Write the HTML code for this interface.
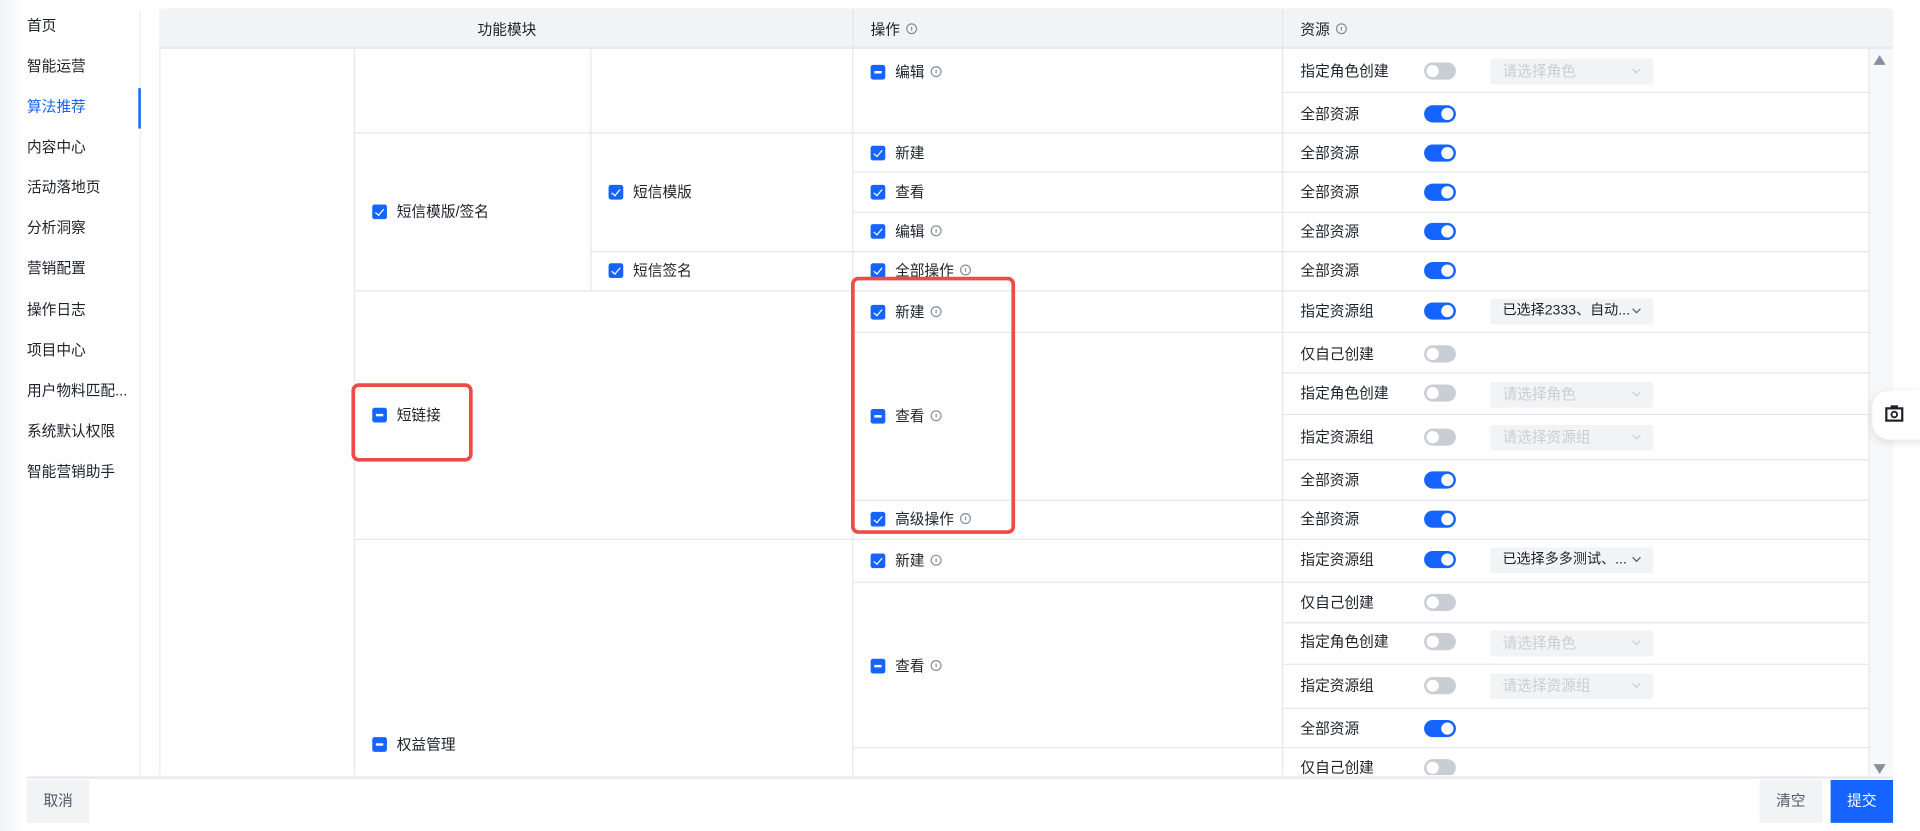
<!DOCTYPE html>
<html><head><meta charset="utf-8"><style>
*{margin:0;padding:0;box-sizing:border-box}
html,body{width:1920px;height:831px;overflow:hidden;background:#fff}
.s{position:absolute;left:0;top:0;width:1568px;height:679px;transform:scale(1.22449);transform-origin:0 0;font-family:"Liberation Sans","Noto Sans CJK SC",sans-serif;font-size:12px;color:#1d2129}
.a{position:absolute}
.nav{position:absolute;left:22px;font-size:12px;line-height:14px}
.r{position:absolute;display:flex;align-items:center;white-space:nowrap;margin-top:-1px}
.cb{width:12px;height:12px;border-radius:2px;background:#1664ff;display:inline-block;position:relative;margin-right:8px;flex:none;margin-top:1px}
.cb.k::after{content:"";position:absolute;left:4px;top:2px;width:3px;height:6px;border:solid #fff;border-width:0 1.3px 1.3px 0;transform:rotate(40deg)}
.cb.m::after{content:"";position:absolute;left:3px;top:5.3px;width:6px;height:1.5px;background:#fff}
.i{display:inline-block;width:9px;height:9px;border:1px solid #86909c;border-radius:50%;margin-left:5px;position:relative}
.i::after{content:"";position:absolute;left:3px;top:1.5px;width:1px;height:3.5px;background:#86909c}
.hl{position:absolute;height:1px;background:#e5e6eb}
.vl{position:absolute;width:1px;background:#e5e6eb}
.tg{position:absolute;left:1163px;width:26px;height:14px;border-radius:7px;background:#c9cdd4}
.tg::after{content:"";position:absolute;left:2px;top:2px;width:10px;height:10px;border-radius:50%;background:#fff}
.tg.on{background:#1664ff}
.tg.on::after{left:14px}
.sel{position:absolute;left:1217px;width:133px;height:21px;background:#f2f3f5;border-radius:2px;color:#c9cdd4;padding-left:10px;line-height:21px;font-size:12px;overflow:hidden;white-space:nowrap}
.sel.v{color:#1d2129;padding-left:10px;font-size:11.5px}
.sel::after{content:"";position:absolute;right:11px;top:6px;width:4px;height:4px;border:solid #c9cdd4;border-width:0 1px 1px 0;transform:rotate(45deg);background:#f2f3f5}
.sel.v::after{border-color:#4e5969}
.lab{position:absolute;left:1062px;margin-top:-1px}
.btn{position:absolute;top:637px;width:51px;height:35px;background:#f2f3f5;line-height:35px;text-align:center;font-size:12px;color:#4e5969}
</style></head><body><div class="s">
<div class="a" style="left:0;top:0;width:22px;height:679px;background:linear-gradient(90deg,#f3f4f6,#fff)"></div>
<div class="vl" style="left:114px;top:8px;height:625px;background:#eceef1"></div>
<div class="a" style="left:113px;top:72px;width:2px;height:33px;background:#1664ff"></div>
<div class="nav" style="top:14px">首页</div>
<div class="nav" style="top:47px">智能运营</div>
<div class="nav" style="top:80px;color:#1664ff">算法推荐</div>
<div class="nav" style="top:113px">内容中心</div>
<div class="nav" style="top:146px">活动落地页</div>
<div class="nav" style="top:179px">分析洞察</div>
<div class="nav" style="top:212px">营销配置</div>
<div class="nav" style="top:246px">操作日志</div>
<div class="nav" style="top:279px">项目中心</div>
<div class="nav" style="top:312px">用户物料匹配...</div>
<div class="nav" style="top:345px">系统默认权限</div>
<div class="nav" style="top:378px">智能营销助手</div>
<div class="a" style="left:130px;top:7px;width:1416px;height:626px;border:1px solid #e5e6eb;border-bottom:none;border-radius:3px 3px 0 0"></div>
<div class="a" style="left:130px;top:7px;width:1416px;height:31px;background:#f2f3f5;border-radius:3px 3px 0 0"></div>
<div class="hl" style="left:130px;top:38px;width:1416px;height:2px;background:#e9eaee"></div>
<div class="vl" style="left:696px;top:7px;height:31px"></div>
<div class="vl" style="left:1047px;top:7px;height:31px"></div>
<div class="r" style="left:390px;top:16px">功能模块</div>
<div class="r" style="left:711px;top:16px">操作<span class="i"></span></div>
<div class="r" style="left:1062px;top:16px">资源<span class="i"></span></div>
<div class="a" style="left:1526px;top:40px;width:20px;height:593px;background:#f7f8fa;border-left:1px solid #e5e6eb"></div>
<div class="a" style="left:1530px;top:45px;width:0;height:0;border-left:5px solid transparent;border-right:5px solid transparent;border-bottom:8px solid #86909c"></div>
<div class="a" style="left:1530px;top:624px;width:0;height:0;border-left:5px solid transparent;border-right:5px solid transparent;border-top:8px solid #86909c"></div>
<div class="vl" style="left:289px;top:40px;height:593px"></div>
<div class="vl" style="left:482px;top:40px;height:197px"></div>
<div class="vl" style="left:696px;top:40px;height:593px"></div>
<div class="vl" style="left:1047px;top:40px;height:593px"></div>
<div class="hl" style="left:289px;top:108px;width:407px"></div>
<div class="hl" style="left:482px;top:205px;width:214px"></div>
<div class="hl" style="left:289px;top:237px;width:407px"></div>
<div class="hl" style="left:289px;top:440px;width:407px"></div>
<div class="r" style="left:304px;top:165px"><span class="cb k"></span>短信模版/签名</div>
<div class="r" style="left:497px;top:149px"><span class="cb k"></span>短信模版</div>
<div class="r" style="left:497px;top:213px"><span class="cb k"></span>短信签名</div>
<div class="r" style="left:304px;top:331px"><span class="cb m"></span>短链接</div>
<div class="r" style="left:304px;top:600px"><span class="cb m"></span>权益管理</div>
<div class="hl" style="left:696px;top:140px;width:351px"></div>
<div class="hl" style="left:696px;top:173px;width:351px"></div>
<div class="hl" style="left:696px;top:271px;width:351px"></div>
<div class="hl" style="left:696px;top:408px;width:351px"></div>
<div class="hl" style="left:696px;top:475px;width:351px"></div>
<div class="hl" style="left:696px;top:610px;width:351px"></div>
<div class="hl" style="left:696px;top:108px;width:351px"></div>
<div class="hl" style="left:696px;top:205px;width:351px"></div>
<div class="hl" style="left:696px;top:237px;width:351px"></div>
<div class="hl" style="left:696px;top:440px;width:351px"></div>
<div class="r" style="left:711px;top:51px"><span class="cb m"></span>编辑<span class="i"></span></div>
<div class="r" style="left:711px;top:117px"><span class="cb k"></span>新建</div>
<div class="r" style="left:711px;top:149px"><span class="cb k"></span>查看</div>
<div class="r" style="left:711px;top:181px"><span class="cb k"></span>编辑<span class="i"></span></div>
<div class="r" style="left:711px;top:213px"><span class="cb k"></span>全部操作<span class="i"></span></div>
<div class="r" style="left:711px;top:247px"><span class="cb k"></span>新建<span class="i"></span></div>
<div class="r" style="left:711px;top:332px"><span class="cb m"></span>查看<span class="i"></span></div>
<div class="r" style="left:711px;top:416px"><span class="cb k"></span>高级操作<span class="i"></span></div>
<div class="r" style="left:711px;top:450px"><span class="cb k"></span>新建<span class="i"></span></div>
<div class="r" style="left:711px;top:536px"><span class="cb m"></span>查看<span class="i"></span></div>
<div class="hl" style="left:1047px;top:75px;width:479px"></div>
<div class="hl" style="left:1047px;top:108px;width:479px"></div>
<div class="hl" style="left:1047px;top:140px;width:479px"></div>
<div class="hl" style="left:1047px;top:173px;width:479px"></div>
<div class="hl" style="left:1047px;top:205px;width:479px"></div>
<div class="hl" style="left:1047px;top:237px;width:479px"></div>
<div class="hl" style="left:1047px;top:271px;width:479px"></div>
<div class="hl" style="left:1047px;top:304px;width:479px"></div>
<div class="hl" style="left:1047px;top:338px;width:479px"></div>
<div class="hl" style="left:1047px;top:375px;width:479px"></div>
<div class="hl" style="left:1047px;top:408px;width:479px"></div>
<div class="hl" style="left:1047px;top:440px;width:479px"></div>
<div class="hl" style="left:1047px;top:475px;width:479px"></div>
<div class="hl" style="left:1047px;top:508px;width:479px"></div>
<div class="hl" style="left:1047px;top:542px;width:479px"></div>
<div class="hl" style="left:1047px;top:578px;width:479px"></div>
<div class="hl" style="left:1047px;top:610px;width:479px"></div>
<div class="lab" style="top:50px">指定角色创建</div><div class="tg" style="top:51px"></div><div class="sel" style="top:48px">请选择角色</div>
<div class="lab" style="top:85px">全部资源</div><div class="tg on" style="top:86px"></div>
<div class="lab" style="top:117px">全部资源</div><div class="tg on" style="top:118px"></div>
<div class="lab" style="top:149px">全部资源</div><div class="tg on" style="top:150px"></div>
<div class="lab" style="top:181px">全部资源</div><div class="tg on" style="top:182px"></div>
<div class="lab" style="top:213px">全部资源</div><div class="tg on" style="top:214px"></div>
<div class="lab" style="top:246px">指定资源组</div><div class="tg on" style="top:247px"></div><div class="sel v" style="top:244px">已选择2333、自动...</div>
<div class="lab" style="top:281px">仅自己创建</div><div class="tg" style="top:282px"></div>
<div class="lab" style="top:313px">指定角色创建</div><div class="tg" style="top:314px"></div><div class="sel" style="top:312px">请选择角色</div>
<div class="lab" style="top:349px">指定资源组</div><div class="tg" style="top:350px"></div><div class="sel" style="top:347px">请选择资源组</div>
<div class="lab" style="top:384px">全部资源</div><div class="tg on" style="top:385px"></div>
<div class="lab" style="top:416px">全部资源</div><div class="tg on" style="top:417px"></div>
<div class="lab" style="top:449px">指定资源组</div><div class="tg on" style="top:450px"></div><div class="sel v" style="top:447px">已选择多多测试、...</div>
<div class="lab" style="top:484px">仅自己创建</div><div class="tg" style="top:485px"></div>
<div class="lab" style="top:516px">指定角色创建</div><div class="tg" style="top:517px"></div><div class="sel" style="top:515px">请选择角色</div>
<div class="lab" style="top:552px">指定资源组</div><div class="tg" style="top:553px"></div><div class="sel" style="top:550px">请选择资源组</div>
<div class="lab" style="top:587px">全部资源</div><div class="tg on" style="top:588px"></div>
<div class="lab" style="top:619px">仅自己创建</div><div class="tg" style="top:620px"></div>
<div class="a" style="left:0;top:633px;width:1568px;height:46px;background:#fff"></div>
<div class="hl" style="left:22px;top:634px;width:1524px;height:2px;background:#e9eaee"></div>
<div class="a" style="left:0;top:633px;width:22px;height:46px;background:linear-gradient(90deg,#f3f4f6,#fff)"></div>
<div class="btn" style="left:22px">取消</div>
<div class="btn" style="left:1437px">清空</div>
<div class="btn" style="left:1495px;background:#1664ff;color:#fff">提交</div>
<div class="a" style="left:287px;top:313px;width:99px;height:64px;border:3px solid #f04a47;border-radius:6px"></div>
<div class="a" style="left:695px;top:226px;width:134px;height:210px;border:3px solid #f04a47;border-radius:6px"></div>
<div class="a" style="left:1529px;top:319px;width:42px;height:40px;background:#fff;border-radius:14px 0 0 14px;box-shadow:0 2px 8px rgba(0,0,0,.12)"></div>
<svg class="a" style="left:1539px;top:330px" width="16" height="15" viewBox="0 0 16 15"><rect x="1.5" y="3.5" width="13" height="10" fill="none" stroke="#1d2129" stroke-width="1.8"/><rect x="5" y="1" width="6" height="2.5" fill="#1d2129"/><circle cx="8" cy="8.5" r="2.3" fill="none" stroke="#1d2129" stroke-width="1.5"/></svg>
</div></body></html>
